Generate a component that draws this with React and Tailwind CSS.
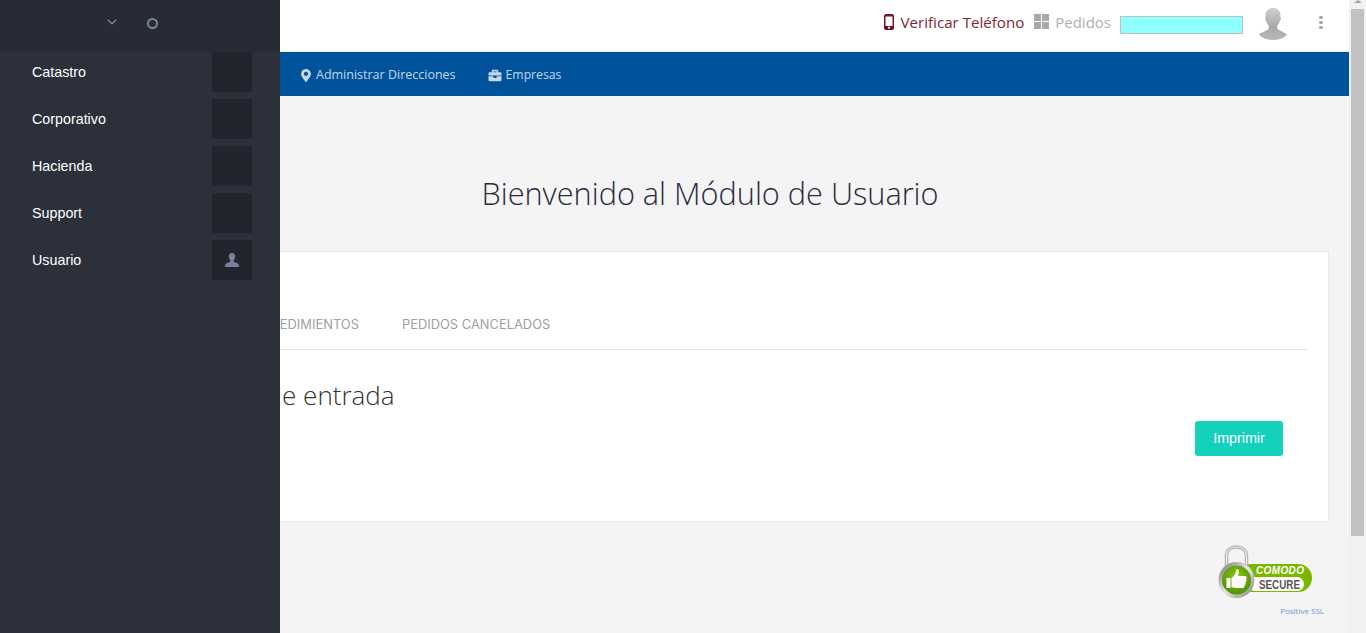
import { FaBriefcase, FaMapMarkerAlt } from 'react-icons/fa';

const sideItems = ['Catastro', 'Corporativo', 'Hacienda', 'Support', 'Usuario'];

function UserGlyph({ className }) {
  return (
    <svg viewBox="0 0 16 16" className={className} fill="currentColor">
      <path d="M8 1C6 1 4.800 2.300 4.800 4.400c0 1.700.7 3 1.500 3.800v1.500C5 10.500 2.200 11 1.300 12.200L1 15h14l-.3-2.800C13.800 11 11 10.500 9.700 9.700V8.200c.8-.8 1.500-2.100 1.500-3.800C11.200 2.300 10 1 8 1z" />
    </svg>
  );
}

function Avatar() {
  return (
    <svg viewBox="0 0 30 32" className="w-[30px] h-[32px]">
      <defs>
        <linearGradient id="avatarFill" x1="0" y1="0" x2="0" y2="1">
          <stop offset="0" stopColor="#cfcfcf" />
          <stop offset="0.6" stopColor="#a9a9a9" />
          <stop offset="1" stopColor="#b8b8b8" />
        </linearGradient>
      </defs>
      <path
        d="M15 0c5 0 7.500 3 7.500 8 0 1.500.6 2 .3 3.600-.2 1-.9 1.200-1.200 1.800-.6 2-1.400 3.400-2.300 4.400v3c1.500 1.800 6.500 3 9.700 5.700C26 30.300 20.500 32 15 32S4 30.300.9 26.500c3.300-2.700 8.300-3.900 9.800-5.700v-3c-.9-1-1.700-2.400-2.300-4.400-.3-.6-1-.8-1.200-1.800C6.900 10 7.500 9.500 7.500 8 7.500 3 10 0 15 0z"
        fill="url(#avatarFill)"
      />
    </svg>
  );
}

function ComodoBadge() {
  return (
    <svg viewBox="0 0 96 54" className="w-[96px] h-[54px]">
      <defs>
        <linearGradient id="ringFill" x1="0" y1="0" x2="1" y2="1">
          <stop offset="0" stopColor="#6f6f6f" />
          <stop offset="0.5" stopColor="#e8e8e8" />
          <stop offset="1" stopColor="#7d7d7d" />
        </linearGradient>
        <radialGradient id="discFill" cx="0.5" cy="0.4" r="0.6">
          <stop offset="0" stopColor="#8ccc10" />
          <stop offset="1" stopColor="#4f9200" />
        </radialGradient>
      </defs>
      <path d="M8.500 24V11C8.500 5 12.500 2 18.500 2S28.500 5 28.500 11V24" fill="none" stroke="#b4b4b4" strokeWidth="3.500" />
      <path d="M8.500 24V11C8.500 5 12.500 2 18.500 2S28.500 5 28.500 11V24" fill="none" stroke="#ececec" strokeWidth="1.200" />
      <rect x="20" y="19" width="74" height="28" rx="14" fill="#7ab800" />
      <rect x="30" y="32" width="56" height="14" rx="7" fill="#fff" />
      <text x="38" y="29" fontFamily="Liberation Sans, sans-serif" fontSize="10" fontWeight="700" fontStyle="italic" fill="#fff" textLength="48" lengthAdjust="spacing">COMODO</text>
      <text x="41" y="44" fontFamily="Liberation Sans, sans-serif" fontSize="12" fontWeight="700" fill="#555" textLength="41" lengthAdjust="spacingAndGlyphs">SECURE</text>
      <circle cx="18.500" cy="35" r="18" fill="url(#ringFill)" />
      <circle cx="18.500" cy="35" r="14.500" fill="url(#discFill)" />
      <path d="M8.500 33h4v10h-4zM13.500 33c3-2 4.500-5 5-9 2.500-.5 3 2.500 1.500 7h7.500c1.500 0 1.500 3 .5 3 1 1 .5 3-.5 3 .6 1.500 0 3-1 3 .3 1.500-.5 3-1.500 3h-7.500c-2 0-3-1-4-1z" fill="#fff" />
    </svg>
  );
}

export default function App() {
  return (
    <div className="relative flex h-[633px] overflow-hidden bg-[#f4f4f4] font-['Open_Sans',sans-serif]">
      <main className="flex-1 min-w-0 flex flex-col">
        <header className="h-[52px] bg-white border-b border-[#eeeeee] flex items-center justify-end">
          <div className="flex items-center pb-[7px]">
            <svg viewBox="0 0 10 16" className="w-[10px] h-[16px] mr-[7px] text-[#701424]">
              <path fill="currentColor" fillRule="evenodd" d="M2 0h6a2 2 0 0 1 2 2v12a2 2 0 0 1-2 2H2a2 2 0 0 1-2-2V2a2 2 0 0 1 2-2zm-.5 2.500v9.500h7V2.500zM4 13v1.500h2V13z" />
            </svg>
            <span className="text-[15.100px] text-[#7f2535]">Verificar Teléfono</span>
            <svg viewBox="0 0 15 15" className="w-[15px] h-[15px] ml-[10px] mr-[6px] text-[#a9a9a9]" fill="currentColor">
              <path d="M0 0h7v7H0zM8 0h7v7H8zM0 8h7v7H0zM8 8h7v7H8z" />
            </svg>
            <span className="text-[15px] text-[#b0b0b0]">Pedidos</span>
          </div>
          <div className="w-[123px] h-[18px] ml-[9px] mt-[-1px] bg-[#8fffff] border border-[#c0c0c0]" />
          <div className="ml-[15px] mt-[-3px]">
            <Avatar />
          </div>
          <div className="ml-[31px] mr-[26px] mb-[7px] flex flex-col gap-[2px]">
            <span className="w-[4px] h-[3px] rounded-full bg-[#a5a5a5]" />
            <span className="w-[4px] h-[3px] rounded-full bg-[#a5a5a5]" />
            <span className="w-[4px] h-[3px] rounded-full bg-[#a5a5a5]" />
          </div>
        </header>

        <nav className="h-[44px] bg-[#00539b] flex items-center pt-[3px] pl-[301px] text-[12.500px] font-medium text-[#c3d7ec]">
          <span className="flex items-center gap-[5px]">
            <FaMapMarkerAlt className="w-[10px] h-[13px]" />
            Administrar Direcciones
          </span>
          <span className="flex items-center gap-[4px] ml-[32px] text-[12.200px]">
            <FaBriefcase className="w-[14px] h-[13px]" />
            Empresas
          </span>
        </nav>

        <h1 className="mt-[74px] ml-[91px] mr-[20px] text-center text-[30.700px] leading-[46px] font-light text-[#2b2b3f]">
          Bienvenido al Módulo de Usuario
        </h1>

        <section className="mt-[35px] ml-[91px] mr-[20px] h-[271px] bg-white border border-[#e9e9e9] px-[20px]">
          <div className="h-[98px] border-b border-[#e3e3e3] flex items-end pb-[15px] pl-[132px] gap-[43px] text-[12.900px] text-[#a0a0a0] font-['Inter',sans-serif]">
            <span>PROCEDIMIENTOS</span>
            <span>PEDIDOS CANCELADOS</span>
          </div>
          <div className="relative">
            <h2 className="pt-[25px] pl-[53px] text-[26px] leading-[40px] font-light text-[#333333]">
              Bandeja de entrada
            </h2>
            <button className="absolute right-[25px] top-[71px] w-[88px] h-[35px] bg-[#14d1bc] rounded-[3px] text-[14.300px] text-white font-['Liberation_Sans',sans-serif]">
              Imprimir
            </button>
          </div>
        </section>

        <footer className="mt-[23px] mr-[20px] flex flex-col items-end pr-[15px]">
          <ComodoBadge />
          <span className="mr-[-10px] mt-[7px] text-[8px] leading-[10px] text-[#6f94cf]">Positive SSL</span>
        </footer>
      </main>

      <div className="w-[17px] shrink-0 bg-[#f1f1f1] flex flex-col items-center">
        <div className="h-[9px] flex items-start justify-center">
          <span className="border-x-[4px] border-x-transparent border-b-[3px] border-b-[#a3a3a3]" />
        </div>
        <div className="h-[527px] w-[13px] bg-[#c1c1c1]" />
      </div>

      <aside className="absolute left-0 top-0 w-[280px] h-full bg-[#2b303b] font-['Liberation_Sans',sans-serif]">
        <div className="h-[52px] bg-[#272b35] relative">
          <svg viewBox="0 0 10 6" className="absolute left-[107px] top-[19px] w-[10px] h-[6px]" fill="none" stroke="#7d8494" strokeWidth="1.300">
            <path d="M.7.7 5 4.800 9.300.7" />
          </svg>
          <span className="absolute left-[147px] top-[18px] w-[11px] h-[11px] rounded-full border-2 border-[#7d8494]" />
        </div>
        <ul className="flex flex-col gap-[7px]">
          {sideItems.map(item => (
            <li key={item} className="flex items-center h-[40px] pl-[32px] pr-[28px] justify-between text-[14.300px] text-white">
              <span className="mt-[2px]">{item}</span>
              <span className="w-[40px] h-[40px] bg-[#21252d] flex items-center justify-center">
                {item === 'Usuario' && <UserGlyph className="w-[16px] h-[16px] text-[#78809a]" />}
              </span>
            </li>
          ))}
        </ul>
      </aside>
    </div>
  );
}
